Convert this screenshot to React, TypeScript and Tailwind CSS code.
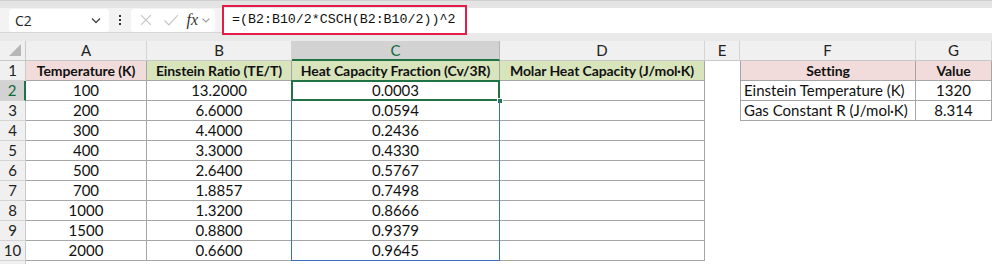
import React from "react";

const cols = [
  { id: "A", w: "w-[121px]" },
  { id: "B", w: "w-[145px]" },
  { id: "C", w: "w-[208px]" },
  { id: "D", w: "w-[205px]" },
  { id: "E", w: "w-[35px]" },
  { id: "F", w: "w-[176px]" },
  { id: "G", w: "w-[76px]" },
];

const data = [
  ["100", "13.2000", "0.0003"],
  ["200", "6.6000", "0.0594"],
  ["300", "4.4000", "0.2436"],
  ["400", "3.3000", "0.4330"],
  ["500", "2.6400", "0.5767"],
  ["700", "1.8857", "0.7498"],
  ["1000", "1.3200", "0.8666"],
  ["1500", "0.8800", "0.9379"],
  ["2000", "0.6600", "0.9645"],
];

const settings = [
  ["Einstein Temperature (K)", "1320"],
  ["Gas Constant R (J/mol·K)", "8.314"],
];

const cellBase = "h-[20px] shrink-0 flex items-center border-r border-b";
const headCell = "justify-center font-bold text-[14px] tracking-[-0.1px] border-[#a6a6a6]";

function RowHead({ n, selected }: { n: number; selected?: boolean }) {
  return (
    <div
      className={`w-[26px] h-[20px] shrink-0 flex items-center justify-center border-b border-[#d4d4d4] ${
        selected ? "bg-[#d2d2d2] text-[#0e6b3a] border-r-2 border-r-[#217346]" : "bg-[#f0f0f0] text-[#222] border-r border-r-[#c8c8c8]"
      }`}
    >
      {n}
    </div>
  );
}

export default function App() {
  return (
    <div className="w-[992px] h-[264px] overflow-hidden bg-white text-[15px] text-[#111]" style={{ fontFamily: "Lato, 'Liberation Sans', sans-serif" }}>
      {/* toolbar */}
      <div className="h-[41px] bg-[#e9e9e9] flex flex-col">
        <div className="h-[8px] bg-[#e4e4e4] border-t border-[#cfcfcf]" />
        <div className="h-[25px] flex items-center bg-[#f3f3f3] border-b border-[#d6d6d6]">
          <div className="ml-[9px] w-[100px] h-[23px] bg-white rounded-[4px] flex items-center justify-between px-[6px] text-[14px] text-[#222]" style={{ fontFamily: "'Open Sans', sans-serif" }}>
            <span>C2</span>
            <svg width="12" height="12" viewBox="0 0 12 12" className="mr-[1px]">
              <path d="M2 4.5 L6 8.5 L10 4.5" fill="none" stroke="#444" strokeWidth="1.3" />
            </svg>
          </div>
          <div className="w-[22px] flex flex-col items-center gap-[2px]">
            <span className="w-[2px] h-[2px] bg-[#333]" />
            <span className="w-[2px] h-[2px] bg-[#333]" />
            <span className="w-[2px] h-[2px] bg-[#333]" />
          </div>
          <div className="w-[84px] h-[23px] bg-white rounded-[4px] flex items-center px-[4px]">
            <svg width="14" height="14" viewBox="0 0 14 14" className="ml-[4px]">
              <path d="M2 2 L12 12 M12 2 L2 12" stroke="#c4c4c4" strokeWidth="1.2" />
            </svg>
            <svg width="16" height="14" viewBox="0 0 16 14" className="ml-[10px]">
              <path d="M1.5 7.5 L6 12 L15 2" fill="none" stroke="#c4c4c4" strokeWidth="1.2" />
            </svg>
            <span className="ml-[8px] italic text-[16px] text-[#333] leading-none" style={{ fontFamily: "'Liberation Serif', serif" }}>fx</span>
            <svg width="10" height="10" viewBox="0 0 10 10" className="ml-[3px]">
              <path d="M1.5 3.5 L5 7 L8.5 3.5" fill="none" stroke="#999" strokeWidth="1.1" />
            </svg>
          </div>
          <div className="ml-[7px] flex-1 h-[25px] bg-white relative">
            <div className="absolute left-0 top-[-3px] w-[245px] h-[30px] border-[2.5px] border-[#e11d48] flex items-center pl-[8px] text-[13.3px] text-[#111]" style={{ fontFamily: "'Liberation Mono', monospace" }}>
              =(B2:B10/2*CSCH(B2:B10/2))^2
            </div>
          </div>
        </div>
      </div>

      {/* column headers */}
      <div className="flex h-[20px]">
        <div className="w-[26px] h-[20px] shrink-0 bg-[#f0f0f0] border-r border-b border-[#c8c8c8] flex items-end justify-end p-[4px]">
          <svg width="12" height="12" viewBox="0 0 12 12">
            <path d="M12 0 L12 12 L0 12 Z" fill="#b7b7b7" />
          </svg>
        </div>
        {cols.map((c) => (
          <div
            key={c.id}
            className={`${c.w} h-[20px] shrink-0 flex items-center justify-center border-r ${
              c.id === "C"
                ? "bg-[#d2d2d2] text-[#0e6b3a] border-r-[#b5b5b5] border-b-2 border-b-[#217346]"
                : "bg-[#f0f0f0] text-[#222] border-[#d4d4d4] border-b border-b-[#c8c8c8]"
            }`}
          >
            {c.id}
          </div>
        ))}
      </div>

      {/* row 1 */}
      <div className="flex">
        <RowHead n={1} />
        <div className={`${cellBase} ${headCell} w-[121px] bg-[#f2dcdb]`}>Temperature (K)</div>
        <div className={`${cellBase} ${headCell} w-[145px] bg-[#d8e4bc]`}>Einstein Ratio (TE/T)</div>
        <div className={`${cellBase} ${headCell} w-[208px] bg-[#d8e4bc]`}>Heat Capacity Fraction (Cv/3R)</div>
        <div className={`${cellBase} ${headCell} w-[205px] bg-[#d8e4bc]`}>Molar Heat Capacity (J/mol·K)</div>
        <div className="w-[35px] h-[20px] shrink-0" />
        <div className={`${cellBase} ${headCell} w-[176px] bg-[#f2dcdb] border-l`}>Setting</div>
        <div className={`${cellBase} ${headCell} w-[76px] bg-[#f2dcdb]`}>Value</div>
      </div>

      {/* data rows */}
      {data.map((r, i) => (
        <div key={i} className="flex">
          <RowHead n={i + 2} selected={i === 0} />
          <div className={`${cellBase} w-[121px] justify-center border-[#a6a6a6]`}>{r[0]}</div>
          <div className={`${cellBase} w-[145px] justify-center border-[#a6a6a6]`}>{r[1]}</div>
          <div className={`${cellBase} w-[208px] justify-center border-[#a6a6a6] relative`}>
            {r[2]}
            <div className={`absolute left-[-1px] right-[-1px] top-[-1px] bottom-[-1px] border-l border-r border-[#3a6fc4] ${i === 8 ? "border-b" : ""}`} />
            {i === 0 && (
              <>
                <div className="absolute left-[-1px] right-[-1px] top-[-1px] bottom-[-1px] border-2 border-[#217346]" />
                <div className="absolute right-[-4px] bottom-[-4px] w-[6px] h-[6px] bg-[#217346] border border-white" />
              </>
            )}
          </div>
          <div className={`${cellBase} w-[205px] border-[#a6a6a6]`} />
          <div className="w-[35px] h-[20px] shrink-0" />
          {i < 2 ? (
            <>
              <div className={`${cellBase} w-[176px] pl-[3px] border-[#a6a6a6] border-l`}>{settings[i][0]}</div>
              <div className={`${cellBase} w-[76px] justify-center border-[#a6a6a6]`}>{settings[i][1]}</div>
            </>
          ) : null}
        </div>
      ))}
      <div className="flex">
        <div className="w-[26px] h-[20px] shrink-0 bg-[#f0f0f0] border-r border-[#c8c8c8]" />
      </div>
    </div>
  );
}
